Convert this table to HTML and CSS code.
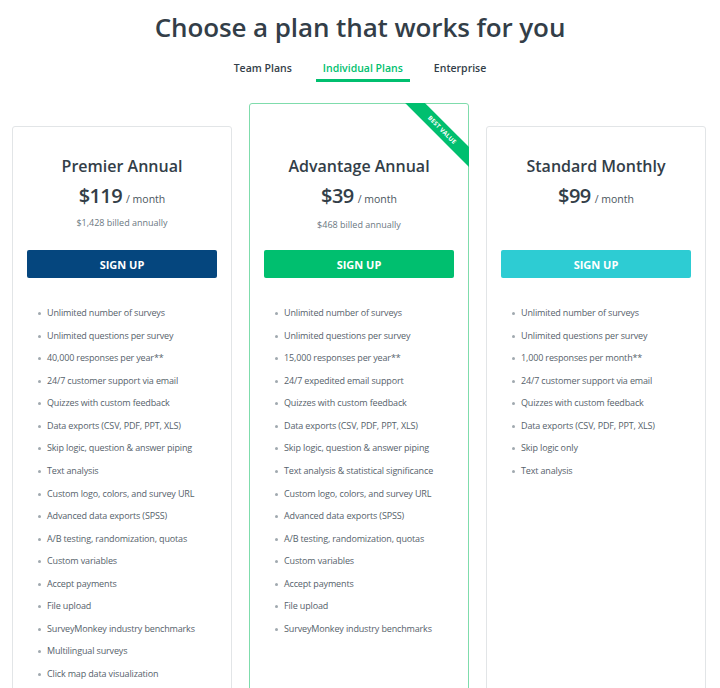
FILE: index.html
```html
<!DOCTYPE html>
<html lang="en">
<head>
<meta charset="utf-8">
<title>Choose a plan</title>
<link rel="stylesheet" href="styles.css">
</head>
<body>
<main class="page">
  <h1 class="title">Choose a plan that works for you</h1>
  <nav class="tabs">
    <span class="tab">Team Plans</span>
    <span class="tab active">Individual Plans</span>
    <span class="tab">Enterprise</span>
  </nav>
  <section class="plans">
    <article class="card">
      <div class="head">
        <h2 class="name">Premier Annual</h2>
        <div class="price"><span class="amount">$119</span><span class="per">/ month</span></div>
        <div class="billed">$1,428 billed annually</div>
      </div>
      <button class="btn btn-blue">SIGN UP</button>
      <ul class="features">
        <li>Unlimited number of surveys</li>
        <li>Unlimited questions per survey</li>
        <li>40,000 responses per year**</li>
        <li>24/7 customer support via email</li>
        <li>Quizzes with custom feedback</li>
        <li>Data exports (CSV, PDF, PPT, XLS)</li>
        <li>Skip logic, question &amp; answer piping</li>
        <li>Text analysis</li>
        <li>Custom logo, colors, and survey URL</li>
        <li>Advanced data exports (SPSS)</li>
        <li>A/B testing, randomization, quotas</li>
        <li>Custom variables</li>
        <li>Accept payments</li>
        <li>File upload</li>
        <li>SurveyMonkey industry benchmarks</li>
        <li>Multilingual surveys</li>
        <li>Click map data visualization</li>
      </ul>
    </article>
    <article class="card featured">
      <div class="ribbon-clip"><div class="ribbon">BEST VALUE</div></div>
      <div class="head">
        <h2 class="name">Advantage Annual</h2>
        <div class="price"><span class="amount">$39</span><span class="per">/ month</span></div>
        <div class="billed billed-low">$468 billed annually</div>
      </div>
      <button class="btn btn-green">SIGN UP</button>
      <ul class="features">
        <li>Unlimited number of surveys</li>
        <li>Unlimited questions per survey</li>
        <li>15,000 responses per year**</li>
        <li>24/7 expedited email support</li>
        <li>Quizzes with custom feedback</li>
        <li>Data exports (CSV, PDF, PPT, XLS)</li>
        <li>Skip logic, question &amp; answer piping</li>
        <li>Text analysis &amp; statistical significance</li>
        <li>Custom logo, colors, and survey URL</li>
        <li>Advanced data exports (SPSS)</li>
        <li>A/B testing, randomization, quotas</li>
        <li>Custom variables</li>
        <li>Accept payments</li>
        <li>File upload</li>
        <li>SurveyMonkey industry benchmarks</li>
      </ul>
    </article>
    <article class="card">
      <div class="head">
        <h2 class="name">Standard Monthly</h2>
        <div class="price"><span class="amount">$99</span><span class="per">/ month</span></div>
      </div>
      <button class="btn btn-teal">SIGN UP</button>
      <ul class="features">
        <li>Unlimited number of surveys</li>
        <li>Unlimited questions per survey</li>
        <li>1,000 responses per month**</li>
        <li>24/7 customer support via email</li>
        <li>Quizzes with custom feedback</li>
        <li>Data exports (CSV, PDF, PPT, XLS)</li>
        <li>Skip logic only</li>
        <li>Text analysis</li>
      </ul>
    </article>
  </section>
</main>
</body>
</html>
```

FILE: styles.css
```css
* { box-sizing: border-box; }
html, body { margin: 0; padding: 0; background: #fff; }
body {
  font-family: "Open Sans", "Noto Sans", sans-serif;
  color: #333e48;
  overflow: hidden;
}
.page {
  width: 720px;
  height: 688px;
  padding-top: 11px;
  overflow: hidden;
}
.title {
  margin: 0;
  text-align: center;
  font-size: 26px;
  line-height: 32px;
  font-weight: 600;
  color: #333e48;
  letter-spacing: -0.1px;
}
.tabs {
  display: flex;
  justify-content: center;
  gap: 17px;
  margin-top: 15px;
  height: 24px;
}
.tab {
  padding: 0 7px;
  font-size: 10.5px;
  font-weight: 600;
  line-height: 20px;
  color: #333e48;
  border-bottom: 3px solid transparent;
}
.tab.active {
  color: #00bf6f;
  border-bottom-color: #00bf6f;
}
.plans {
  display: flex;
  align-items: flex-start;
  gap: 17px;
  padding-left: 12px;
  margin-top: 21px;
}
.card {
  position: relative;
  width: 220px;
  height: 620px;
  margin-top: 23px;
  border: 1px solid #e2e5e7;
  border-radius: 3px;
  padding: 28px 14px 0;
}
.card.featured {
  margin-top: 0;
  padding-top: 51px;
  border-color: #7fdcac;
}
.head {
  height: 95px;
  text-align: center;
}
.name {
  margin: 0;
  font-size: 16px;
  line-height: 22px;
  font-weight: 600;
  color: #333e48;
}
.price {
  margin-top: 5px;
  line-height: 28px;
}
.amount {
  font-size: 20px;
  font-weight: 600;
  letter-spacing: -0.6px;
  color: #333e48;
}
.per {
  font-size: 10.5px;
  color: #4b5660;
  margin-left: 4px;
}
.billed {
  margin-top: 3px;
  font-size: 9px;
  line-height: 14px;
  color: #6b787f;
}
.billed-low { margin-top: 5px; }
.btn {
  display: block;
  width: 100%;
  height: 28px;
  border: 0;
  border-radius: 2px;
  color: #fff;
  font-family: inherit;
  font-size: 11px;
  font-weight: 700;
  letter-spacing: 0;
}
.btn-blue { background: #05467e; }
.btn-green { background: #00bf6f; }
.btn-teal { background: #2dccd3; }
.features {
  list-style: none;
  margin: 24px 0 0;
  padding: 0 0 0 20px;
}
.features li {
  position: relative;
  font-size: 9px;
  line-height: 22.56px;
  letter-spacing: -0.15px;
  color: #56626b;
  white-space: nowrap;
}
.features li::before {
  content: "";
  position: absolute;
  left: -9px;
  top: 10px;
  width: 3px;
  height: 3px;
  border-radius: 50%;
  background: #a0a9af;
}
.ribbon-clip {
  position: absolute;
  top: -1px;
  right: -1px;
  width: 80px;
  height: 80px;
  overflow: hidden;
}
.ribbon {
  position: absolute;
  left: -2px;
  top: 20px;
  width: 110px;
  height: 14px;
  background: #00bf6f;
  color: #fff;
  font-size: 6px;
  font-weight: 700;
  line-height: 14px;
  text-align: center;
  letter-spacing: 0.2px;
  transform: rotate(45deg);
}
```
